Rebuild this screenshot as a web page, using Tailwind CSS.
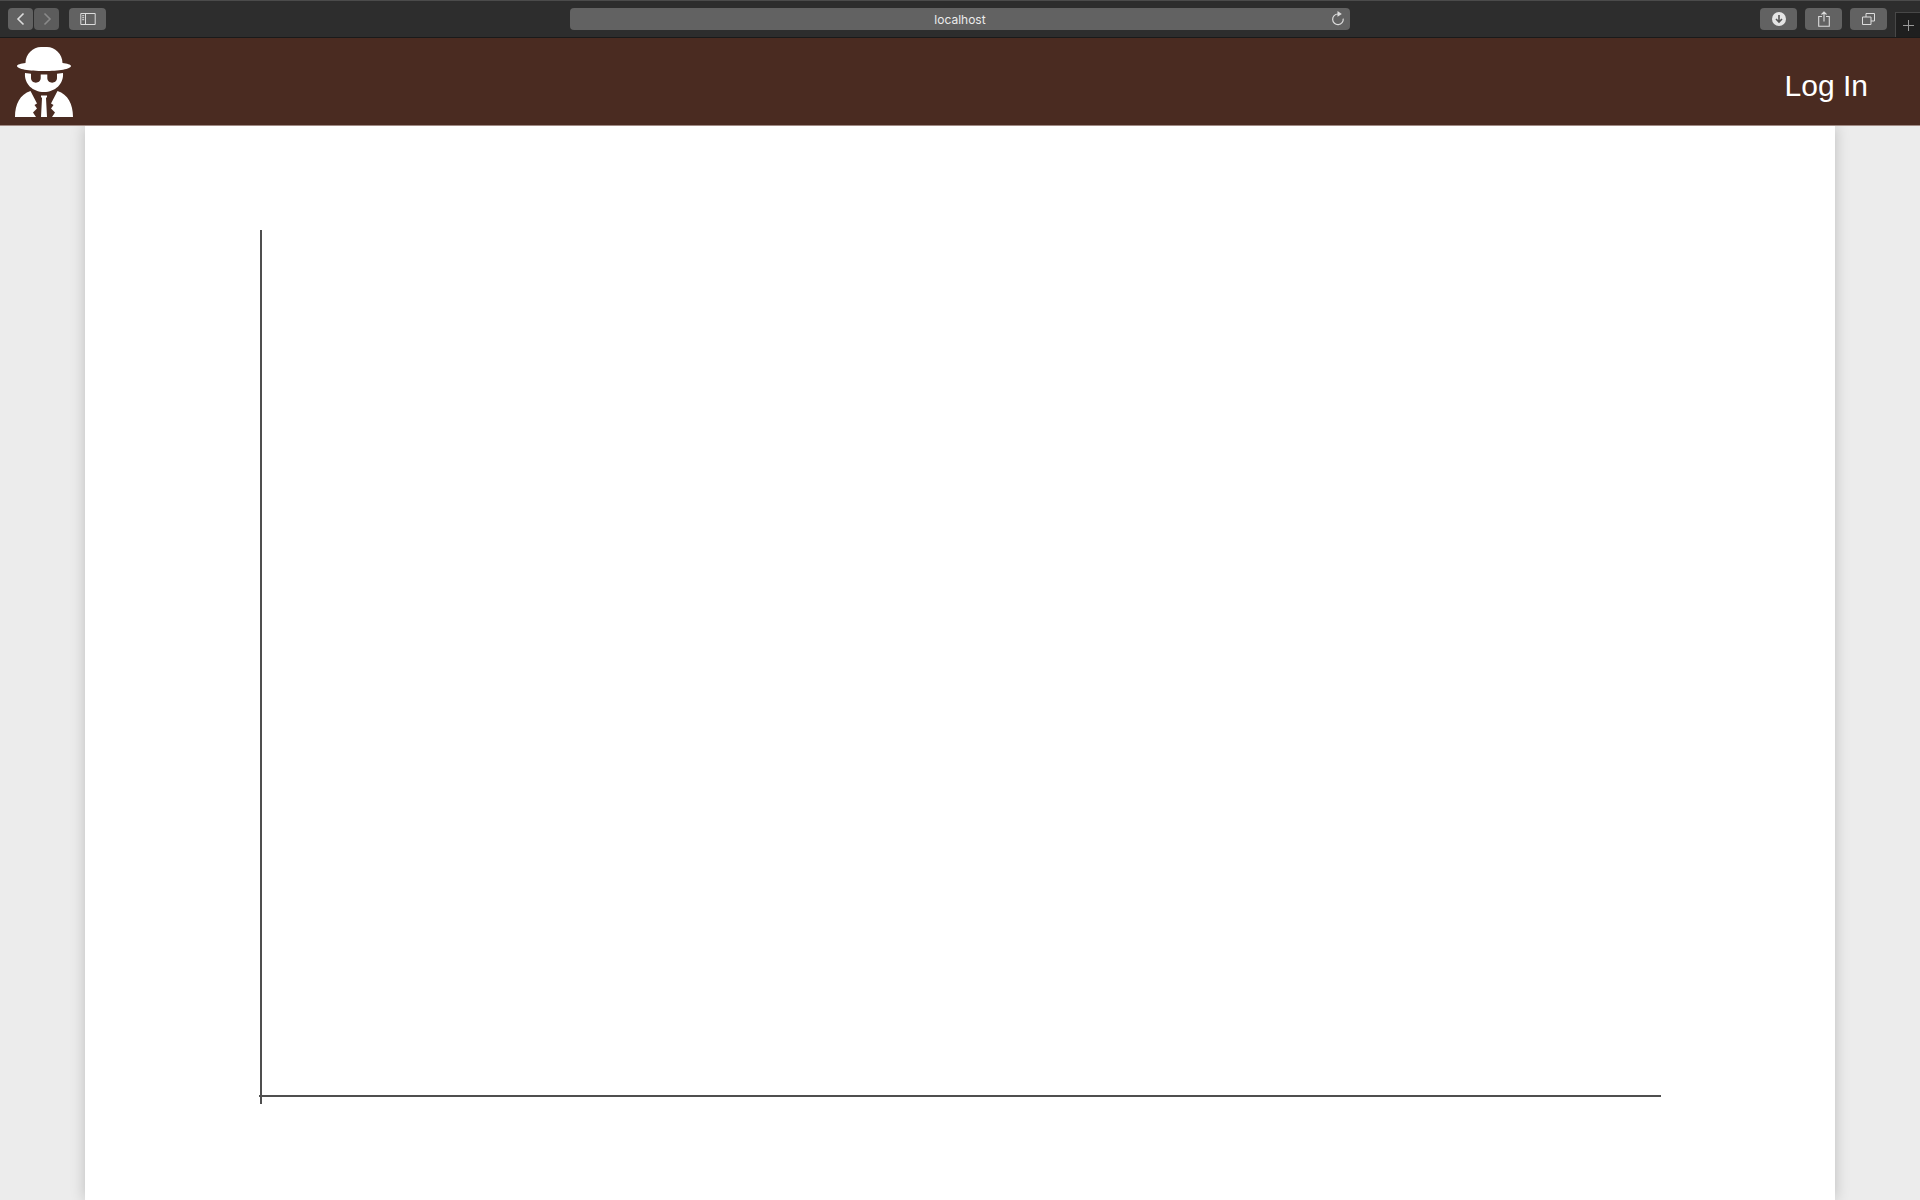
<!DOCTYPE html>
<html lang="en">
<head>
  <meta charset="UTF-8" />
  <meta name="viewport" content="width=device-width, initial-scale=1.0" />
  <title>localhost</title>
  <script src="https://cdn.jsdelivr.net/npm/@tailwindcss/browser@4"></script>
</head>
<body class="flex min-h-screen flex-col bg-[#ececec] font-['Liberation_Sans',sans-serif]">
  <!-- Browser toolbar -->
  <div class="grid h-[38px] grid-cols-[1fr_780px_1fr] border-t border-b border-t-[#4b4b4b] border-b-[#1a1a1a] bg-[#2d2d2d] text-[#dcdcdc]">
    <div class="flex items-center pl-2">
      <button aria-label="Back" class="flex h-[22px] w-[25px] items-center justify-center rounded bg-[#626262]">
        <svg class="size-4" viewBox="0 0 16 16" fill="none" stroke="currentColor" stroke-width="1.6"><path d="M10.5 2.5 5 8l5.5 5.5" /></svg>
      </button>
      <button aria-label="Forward" class="ml-px flex h-[22px] w-[25px] items-center justify-center rounded bg-[#5c5c5c] text-[#8a8a8a]">
        <svg class="size-4" viewBox="0 0 16 16" fill="none" stroke="currentColor" stroke-width="1.6"><path d="M5.5 2.5 11 8l-5.5 5.5" /></svg>
      </button>
      <button aria-label="Show sidebar" class="ml-[10px] flex h-[22px] w-[37px] items-center justify-center rounded bg-[#626262]">
        <svg class="h-3 w-4" viewBox="0 0 16 12" fill="none" stroke="currentColor"><path d="M.8.5h14.4v11H.8zM5.5.5v11M2.2 2.7h2M2.2 4.7h2M2.2 6.7h2" /></svg>
      </button>
    </div>

    <div class="relative flex items-center">
      <input type="text" value="localhost" aria-label="Address" class="h-[22px] w-full rounded bg-[#626262] text-center font-['Inter',sans-serif] text-xs text-[#ececec]" />
      <button aria-label="Reload" class="absolute right-1 flex size-4 items-center justify-center">
        <svg class="size-4" viewBox="0 0 16 16" fill="none" stroke="currentColor" stroke-width="1.2"><path d="M8 3a5.3 5.3 0 1 0 5.2 4.6" /><path d="m7.5 0 4.3 3-4.3 2.8z" fill="currentColor" stroke="none" /></svg>
      </button>
    </div>

    <div class="flex items-center justify-end gap-2">
      <button aria-label="Downloads" class="flex h-[22px] w-[37px] items-center justify-center rounded bg-[#626262]">
        <svg class="size-[14px]" viewBox="0 0 14 14"><circle cx="7" cy="7" r="7" fill="#e4e4e4" /><path d="M7 3v7M4 7l3 3 3-3" fill="none" stroke="#555" stroke-width="1.6" /></svg>
      </button>
      <button aria-label="Share" class="flex h-[22px] w-[37px] items-center justify-center rounded bg-[#626262]">
        <svg class="h-4 w-3" viewBox="0 0 12 16" fill="none" stroke="currentColor" stroke-width="1.1"><path d="M4 5.5H.7v9.7h10.6V5.5H8M6 10.5V1M3.5 3.5 6 1l2.500 2.500" /></svg>
      </button>
      <button aria-label="Show all tabs" class="flex h-[22px] w-[37px] items-center justify-center rounded bg-[#626262]">
        <svg class="h-3 w-[13px]" viewBox="0 0 13 12" fill="none" stroke="currentColor"><path d="M.5 4H9v7.500H.5zM4 4V.5h8.500V8H9" /></svg>
      </button>
      <button aria-label="New tab" class="flex h-[25px] w-[25px] items-center justify-center self-end border-t border-l border-[#484848] bg-[#1f1f1f] text-[#999]">
        <svg class="size-[11px]" viewBox="0 0 11 11" stroke="currentColor"><path d="M5.5 0v11M0 5.5h11" /></svg>
      </button>
    </div>
  </div>

  <!-- Navbar -->
  <header class="z-10 flex h-[88px] items-center justify-between border-b border-[#a08a84] bg-[#4a2b21] pr-[52px] pl-[15px]">
    <a href="#" aria-label="Home">
      <svg class="h-[70px] w-[58px]" viewBox="0 0 58 70" fill="#fff">
        <path d="M2 19c0-1.300 4-2.500 8.500-3C10.500 7 18 0 26 0h6c8 0 15.500 7 15.500 16 4.500.5 8.500 1.700 8.500 3 0 3-12 5-27 5S2 22 2 19z" />
        <path d="M10 26l6 .7V31c0 6.200 9.700 6.200 9.700 0 0-3.700 6.600-3.700 6.600 0 0 6.200 9.700 6.200 9.700 0v-4.300l6-.7c1 11-8 19-19 19S9 37 10 26zM25.700 27.500h6.600V31h-6.600z" />
        <path d="M15.500 44 22 56.500l-2.500 1.500 2.500 3.500-4 4 3 4.500H0C0 57 5 47.500 15.500 44zM42.500 44 36 56.500l2.500 1.500-2.500 3.500 4 4-3 4.500H58c0-13-5-22.500-15.500-26z" />
        <path d="M26 48.500h6V50l-1 1 1 19h-6l1-19-1-1z" />
      </svg>
    </a>
    <a href="#" class="pt-2 text-3xl text-white">Log In</a>
  </header>

  <main class="mx-auto w-full max-w-[1750px] grow bg-white px-[175px] pt-[103px] pb-[96px] shadow-[0_0_14px_rgba(0,0,0,0.2)]">
    <!-- Chart axes -->
    <svg class="block aspect-[1400/875] w-full overflow-visible" viewBox="0 0 1400 875" stroke="#4f4f4f" stroke-width="2" role="img" aria-label="Empty chart">
      <line x1="1" y1="1" x2="1" y2="875" />
      <line x1="-1" y1="867" x2="1401" y2="867" />
    </svg>
  </main>
</body>
</html>
